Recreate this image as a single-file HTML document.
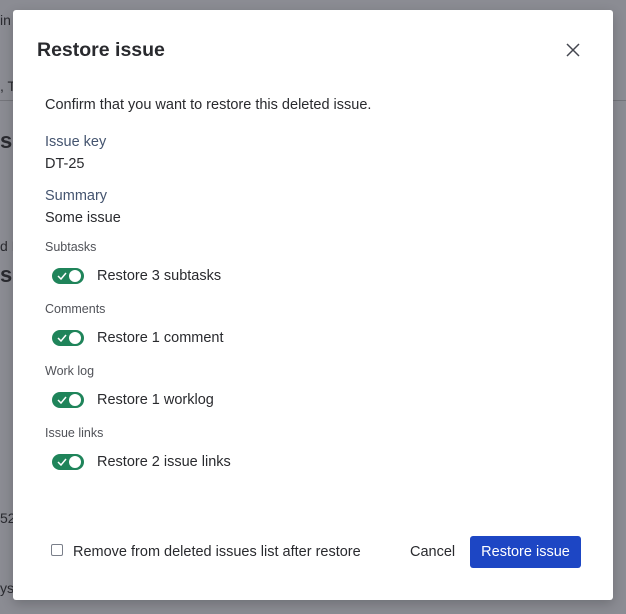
<!DOCTYPE html>
<html><head><style>
body{margin:0;width:626px;height:614px;background:#8b8c93;font-family:"Liberation Sans",sans-serif;position:relative;overflow:hidden;color:#172b4d}
.bg{position:absolute;color:#2a2b30;font-size:14px}
.m{position:absolute;left:13px;top:10px;width:600px;height:590px;background:#fff;border-radius:3px;box-shadow:0 4px 12px rgba(0,0,0,.2)}
.a{position:absolute;white-space:nowrap}
.t{font-size:14.5px;color:#292a2e}
.lab{font-size:14.5px;color:#44546f}
.sm{font-size:12.5px;color:#505258}
.tg{position:absolute;left:39px;width:32px;height:16px;border-radius:8px;background:#1f845a}
.tg:after{content:"";position:absolute;right:3px;top:2px;width:12px;height:12px;border-radius:50%;background:#fff}
.tg svg{position:absolute;left:5px;top:4px}
</style></head><body>
<div class="bg" style="left:0;top:12px">in</div>
<div class="bg" style="left:0;top:78px">, T</div>
<div style="position:absolute;left:0;top:100px;width:626px;height:1px;background:#74757b"></div>
<div class="bg" style="left:0;top:128px;font-size:22px;font-weight:bold">s</div>
<div class="bg" style="left:0;top:238px">d I</div>
<div class="bg" style="left:0;top:262px;font-size:22px;font-weight:bold">su</div>
<div class="bg" style="left:0;top:510px">52</div>
<div class="bg" style="left:0;top:580px">ys</div>
<div class="m">
<div class="a" style="left:24px;top:29px;font-size:19.5px;font-weight:bold;color:#292a2e">Restore issue</div>
<svg class="a" style="left:553px;top:33px" width="14" height="14"><path d="M1 1L13 13M13 1L1 13" stroke="#44474f" stroke-width="1.5"/></svg>
<div class="a t" style="left:32px;top:87px">Confirm that you want to restore this deleted issue.</div>
<div class="a lab" style="left:32px;top:124px">Issue key</div>
<div class="a t" style="left:32px;top:146px">DT-25</div>
<div class="a lab" style="left:32px;top:178px">Summary</div>
<div class="a t" style="left:32px;top:200px">Some issue</div>
<div class="a sm" style="left:32px;top:230px">Subtasks</div>
<div class="tg" style="top:258px"><svg width="10" height="8"><path d="M1 4L4 7L9 1" stroke="#fff" stroke-width="1.5" fill="none"/></svg></div>
<div class="a t" style="left:84px;top:258px">Restore 3 subtasks</div>
<div class="a sm" style="left:32px;top:292px">Comments</div>
<div class="tg" style="top:320px"><svg width="10" height="8"><path d="M1 4L4 7L9 1" stroke="#fff" stroke-width="1.5" fill="none"/></svg></div>
<div class="a t" style="left:84px;top:320px">Restore 1 comment</div>
<div class="a sm" style="left:32px;top:354px">Work log</div>
<div class="tg" style="top:382px"><svg width="10" height="8"><path d="M1 4L4 7L9 1" stroke="#fff" stroke-width="1.5" fill="none"/></svg></div>
<div class="a t" style="left:84px;top:382px">Restore 1 worklog</div>
<div class="a sm" style="left:32px;top:416px">Issue links</div>
<div class="tg" style="top:444px"><svg width="10" height="8"><path d="M1 4L4 7L9 1" stroke="#fff" stroke-width="1.5" fill="none"/></svg></div>
<div class="a t" style="left:84px;top:444px">Restore 2 issue links</div>
<div class="a" style="left:38px;top:534px;width:10px;height:10px;border:1.5px solid #7a7f8a;border-radius:2px"></div>
<div class="a t" style="left:60px;top:534px">Remove from deleted issues list after restore</div>
<div class="a t" style="left:397px;top:534px">Cancel</div>
<div class="a" style="left:457px;top:526px;width:111px;height:32px;background:#1d46c4;border-radius:3px;color:#fff;font-size:14.5px;line-height:32px;text-align:center">Restore issue</div>
</div>
</body></html>
